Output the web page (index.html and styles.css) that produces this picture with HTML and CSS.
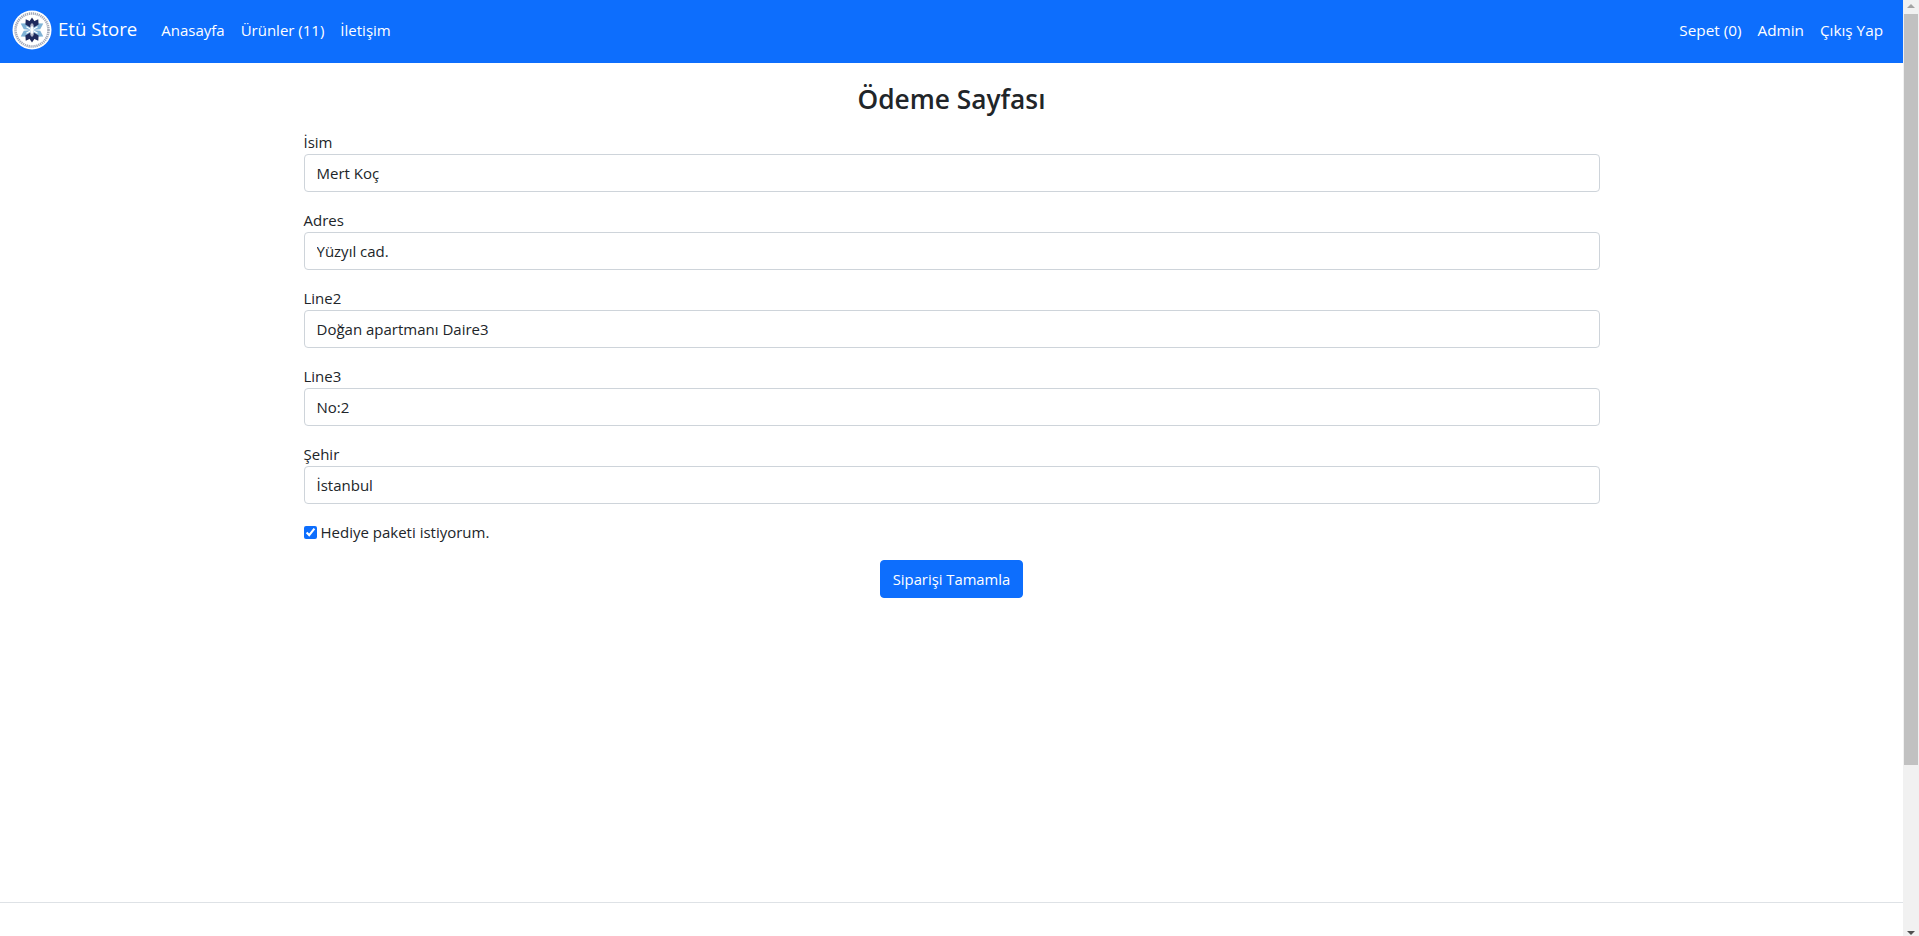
FILE: index.html
```html
<!DOCTYPE html>
<html lang="tr">
<head>
  <title>Etü Store</title>
  <meta charset="utf-8">
  <link rel="stylesheet" href="styles.css">
</head>
<body>
  <div class="page">
    <nav class="navbar">
      <a class="brand" href="#">
        <svg class="logo" viewBox="0 0 40 40" width="40" height="40">
          <circle cx="20" cy="20" r="19.500" fill="#fff"/>
          <circle cx="20" cy="20" r="16.500" fill="none" stroke="#a3aaba" stroke-width="2.600" stroke-dasharray="1.300 .7"/>
          <g class="flake-light">
            <path d="M20 20L23.500 12.500 20 7 16.500 12.500Z" transform="rotate(60 20 20)"/>
            <path d="M20 20L23.500 12.500 20 7 16.500 12.500Z" transform="rotate(120 20 20)"/>
            <path d="M20 20L23.500 12.500 20 7 16.500 12.500Z" transform="rotate(240 20 20)"/>
            <path d="M20 20L23.500 12.500 20 7 16.500 12.500Z" transform="rotate(300 20 20)"/>
          </g>
          <g class="flake-dark">
            <path d="M20 17L23 12 20 7.500 17 12Z"/>
            <path d="M20 17L23 12 20 7.500 17 12Z" transform="rotate(30 20 20)"/>
            <path d="M20 17L23 12 20 7.500 17 12Z" transform="rotate(-30 20 20)"/>
            <path d="M20 17L23 12 20 7.500 17 12Z" transform="rotate(180 20 20)"/>
            <path d="M20 17L23 12 20 7.500 17 12Z" transform="rotate(150 20 20)"/>
            <path d="M20 17L23 12 20 7.500 17 12Z" transform="rotate(210 20 20)"/>
          </g>
          <path class="flake-white" d="M20 13.500V26.500M14.400 16.750L25.600 23.250M25.600 16.750L14.400 23.250"/>
        </svg>
        <span class="brand-name">Etü Store</span>
      </a>
      <ul class="nav-list">
        <li><a href="#">Anasayfa</a></li>
        <li><a href="#">Ürünler (11)</a></li>
        <li><a href="#">İletişim</a></li>
      </ul>
      <ul class="nav-list nav-right">
        <li><a href="#">Sepet (0)</a></li>
        <li><a href="#">Admin</a></li>
        <li><a href="#">Çıkış Yap</a></li>
      </ul>
    </nav>

    <main class="container">
      <h1 class="page-title">Ödeme Sayfası</h1>
      <form>
        <div class="field">
          <label for="isim">İsim</label>
          <input id="isim" type="text" value="Mert Koç">
        </div>
        <div class="field">
          <label for="adres">Adres</label>
          <input id="adres" type="text" value="Yüzyıl cad.">
        </div>
        <div class="field">
          <label for="line2">Line2</label>
          <input id="line2" type="text" value="Doğan apartmanı Daire3">
        </div>
        <div class="field">
          <label for="line3">Line3</label>
          <input id="line3" type="text" value="No:2">
        </div>
        <div class="field">
          <label for="sehir">Şehir</label>
          <input id="sehir" type="text" value="İstanbul">
        </div>
        <div class="check">
          <input id="hediye" type="checkbox" checked>
          <label for="hediye">Hediye paketi istiyorum.</label>
        </div>
        <div class="actions">
          <button type="button" class="btn">Siparişi Tamamla</button>
        </div>
      </form>
    </main>

    <footer class="footer"></footer>
  </div>

  <div class="scrollbar">
    <div class="arrow arrow-up"></div>
    <div class="track"><div class="thumb"></div></div>
    <div class="arrow arrow-down"></div>
  </div>
</body>
</html>
```

FILE: styles.css
```css
* {
  box-sizing: border-box;
}
html, body {
  height: 100%;
  margin: 0;
  overflow: hidden;
}
body {
  display: flex;
  background: #fff;
  color: #212529;
  font-family: "Open Sans", "Noto Sans", sans-serif;
  font-size: 15px;
  line-height: 24px;
}
a {
  color: inherit;
  text-decoration: none;
}

.page {
  flex-grow: 1;
  display: flex;
  flex-direction: column;
  min-width: 0;
}

.navbar {
  height: 63px;
  flex-shrink: 0;
  background: #0d6efd;
  color: #fff;
  display: flex;
  align-items: flex-start;
  padding: 10px 12px 0;
}
.brand {
  display: flex;
  align-items: center;
  gap: 6px;
  font-size: 18.600px;
  margin-right: 16px;
}
.brand-name {
  padding-bottom: 3px;
}
.logo {
  display: block;
}
.flake-light path {
  fill: #7fb2d6;
}
.flake-dark path {
  fill: #1f2a5c;
}
.flake-white {
  fill: none;
  stroke: #fff;
  stroke-width: 1.300;
}
.nav-list {
  display: flex;
  margin: 0;
  padding: 0;
  list-style: none;
}
.nav-list li {
  padding: 8px;
}
.nav-right {
  margin-left: auto;
  font-size: 15.300px;
}

.container {
  width: 1320px;
  margin: 0 auto;
  padding: 0 12px;
  flex-grow: 1;
}
.page-title {
  margin: 0;
  padding-top: 18px;
  height: 67px;
  font-size: 26.300px;
  line-height: 36px;
  font-weight: 600;
  text-align: center;
}
.field {
  margin-bottom: 16px;
}
.field label {
  display: block;
}
.field input {
  display: block;
  width: 100%;
  height: 38px;
  padding: 6px 12px;
  border: 1px solid #ced4da;
  border-radius: 4px;
  background: #fff;
  color: #212529;
  font: inherit;
}
.check {
  display: flex;
  align-items: center;
  gap: 4px;
  margin-bottom: 16px;
}
.check input {
  width: 13px;
  height: 13px;
  margin: 0;
  accent-color: #0d6efd;
}
.actions {
  text-align: center;
}
.btn {
  height: 38px;
  padding: 6px 12px;
  border: 1px solid #0d6efd;
  border-radius: 4px;
  background: #0d6efd;
  color: #fff;
  font: inherit;
  font-size: 14.800px;
}

.footer {
  height: 34px;
  flex-shrink: 0;
  border-top: 1px solid #dee2e6;
}

.scrollbar {
  width: 16px;
  flex-shrink: 0;
  display: flex;
  flex-direction: column;
  background: #f1f1f1;
}
.arrow {
  height: 14px;
  display: flex;
  justify-content: center;
}
.arrow::before {
  content: "";
  height: 0;
  border-left: 4px solid transparent;
  border-right: 4px solid transparent;
}
.arrow-up {
  align-items: flex-start;
  padding-top: 4px;
}
.arrow-up::before {
  border-bottom: 4px solid #a3a3a3;
}
.arrow-down {
  align-items: flex-end;
  padding-bottom: 1px;
}
.arrow-down::before {
  border-top: 4px solid #505050;
}
.track {
  flex-grow: 1;
  padding: 0 1px;
}
.thumb {
  height: 751px;
  background: #c1c1c1;
}
```
